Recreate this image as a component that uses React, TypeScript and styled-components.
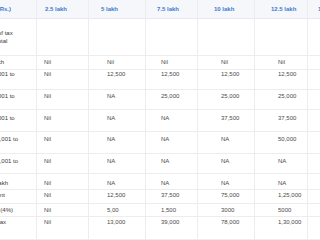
import React from "react";
import styled, { createGlobalStyle } from "styled-components";

const GlobalStyle = createGlobalStyle`
  html, body {
    margin: 0;
    padding: 0;
    background: #ffffff;
  }
  body {
    font-family: "Liberation Sans", Arial, sans-serif;
  }
`;

interface IColumn {
  label: string;
  width: number;
  headPad: number;
  bodyPad: number;
}

const columns: Array<IColumn> = [
  { label: "Income (Rs.)", width: 73, headPad: 11, bodyPad: 10 },
  { label: "2.5 lakh", width: 52, headPad: 8, bodyPad: 7 },
  { label: "5 lakh", width: 57, headPad: 12, bodyPad: 18 },
  { label: "7.5 lakh", width: 52, headPad: 11, bodyPad: 15 },
  { label: "10 lakh", width: 57, headPad: 16, bodyPad: 23 },
  { label: "12.5 lakh", width: 53, headPad: 16, bodyPad: 23 },
  { label: "15 lakh", width: 57, headPad: 10, bodyPad: 23 },
];

interface IRow {
  label: Array<string>;
  values: Array<string>;
  height: number;
  top: number;
}

const rows: Array<IRow> = [
  {
    label: ["The rate of tax", "(in % of total", "income)"],
    values: ["", "", "", "", "", ""],
    height: 37,
    top: 10,
  },
  {
    label: ["Till 2.5 lakh"],
    values: ["Nil", "Nil", "Nil", "Nil", "Nil", "Nil"],
    height: 14,
    top: 2,
  },
  {
    label: ["Rs. 2,50,001 to", "5 lakh"],
    values: ["Nil", "12,500", "12,500", "12,500", "12,500", "12,500"],
    height: 20,
    top: 0,
  },
  {
    label: ["Rs. 5,00,001 to", "7.5 lakh"],
    values: ["Nil", "NA", "25,000", "25,000", "25,000", "25,000"],
    height: 20,
    top: 2,
  },
  {
    label: ["Rs. 7,50,001 to", "10 lakh"],
    values: ["Nil", "NA", "NA", "37,500", "37,500", "37,500"],
    height: 22,
    top: 4,
  },
  {
    label: ["Rs. 10,00,001 to", "12.5 lakh"],
    values: ["Nil", "NA", "NA", "NA", "50,000", "50,000"],
    height: 22,
    top: 3,
  },
  {
    label: ["Rs. 12,50,001 to", "15 lakh"],
    values: ["Nil", "NA", "NA", "NA", "NA", "62,500"],
    height: 20,
    top: 3,
  },
  {
    label: ["Over 15 lakh"],
    values: ["Nil", "NA", "NA", "NA", "NA", "NA"],
    height: 16,
    top: 5,
  },
  {
    label: ["Tax amount"],
    values: ["Nil", "12,500", "37,500", "75,000", "1,25,000", "1,87,500"],
    height: 14,
    top: 1,
  },
  {
    label: ["Add cess (4%)"],
    values: ["Nil", "5,00", "1,500", "3000", "5000", "7,500"],
    height: 13,
    top: 2,
  },
  {
    label: ["Net total tax", "payable"],
    values: ["Nil", "13,000", "39,000", "78,000", "1,30,000", "1,95,000"],
    height: 23,
    top: 1,
  },
];

const tableWidth = columns.reduce((sum, col) => sum + col.width, 0);

const Viewport = styled.div`
  width: 320px;
  height: 240px;
  overflow: hidden;
  background: #ffffff;
`;

const Table = styled.table`
  margin-left: -36px;
  width: ${tableWidth}px;
  table-layout: fixed;
  border-collapse: separate;
  border-spacing: 0;
  font-size: 6px;
  line-height: 8px;
  color: #4a4a4a;
`;

const HeadRow = styled.tr`
  height: 19px;
  background: #f5f7fb;
`;

interface PadProps {
  $pad: number;
}

const HeadCell = styled.th<PadProps>`
  padding: 5px 0 0 ${({ $pad }) => $pad}px;
  vertical-align: top;
  text-align: left;
  white-space: nowrap;
  font-weight: 700;
  color: #3f7bcc;
  border-right: 1px solid #ebedf0;
  border-bottom: 1px solid #e6e9ee;
`;

interface RowProps {
  $height: number;
  $top: number;
}

const Row = styled.tr<RowProps>`
  height: ${({ $height }) => $height}px;
  & > td {
    padding-top: ${({ $top }) => $top}px;
  }
`;

const Cell = styled.td<PadProps>`
  padding: 0 0 0 ${({ $pad }) => $pad}px;
  vertical-align: top;
  text-align: left;
  white-space: nowrap;
  border-right: 1px solid #ededed;
  border-bottom: 1px solid #ededed;
`;

const Label = styled(Cell)`
  color: #3a3a3a;
`;

const App: React.FC = () => {
  return (
    <Viewport>
      <GlobalStyle />
      <Table>
        <colgroup>
          {columns.map((col) => (
            <col key={col.label} style={{ width: col.width }} />
          ))}
        </colgroup>
        <thead>
          <HeadRow>
            {columns.map((col) => (
              <HeadCell key={col.label} $pad={col.headPad}>
                {col.label}
              </HeadCell>
            ))}
          </HeadRow>
        </thead>
        <tbody>
          {rows.map((row) => (
            <Row key={row.label[0]} $height={row.height} $top={row.top}>
              <Label $pad={columns[0].bodyPad}>
                {row.label.map((line, i) => (
                  <React.Fragment key={line}>
                    {i > 0 && <br />}
                    {line}
                  </React.Fragment>
                ))}
              </Label>
              {row.values.map((value, i) => (
                <Cell key={columns[i + 1].label} $pad={columns[i + 1].bodyPad}>
                  {value}
                </Cell>
              ))}
            </Row>
          ))}
        </tbody>
      </Table>
    </Viewport>
  );
};

export default App;
